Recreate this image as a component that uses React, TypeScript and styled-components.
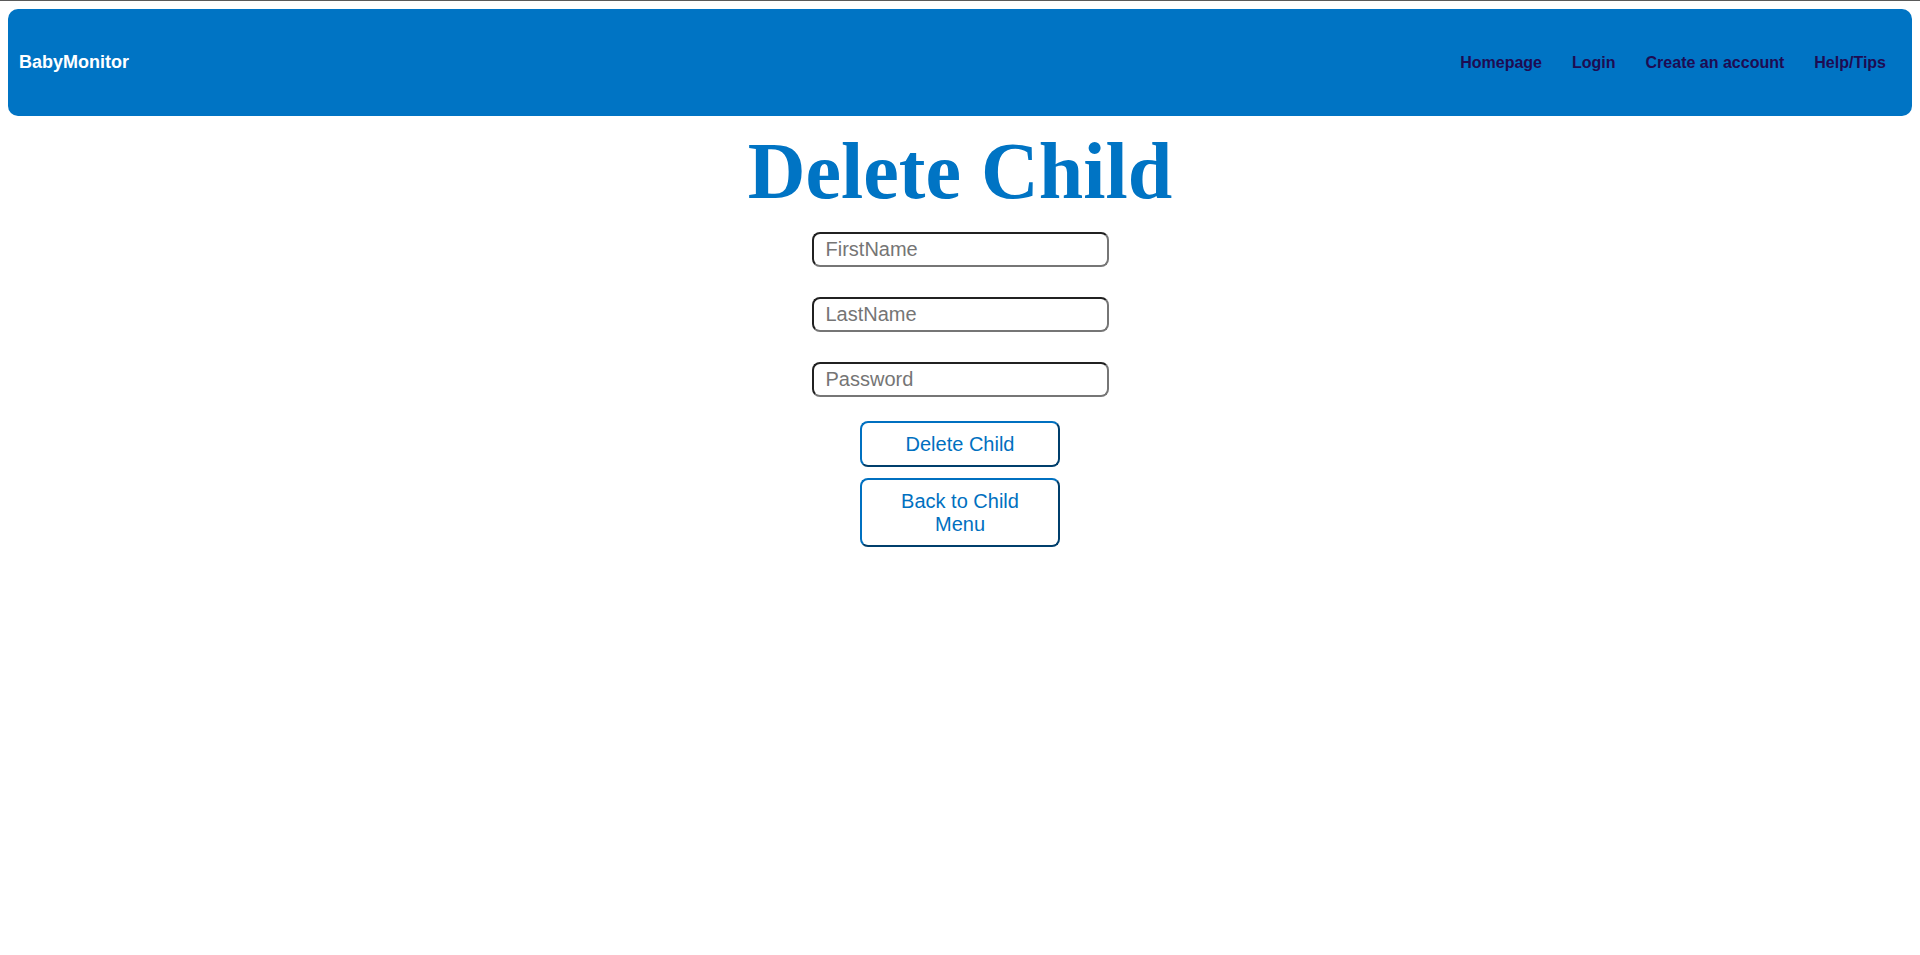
import React, { useState } from "react";
import styled, { createGlobalStyle } from "styled-components";

const GlobalStyle = createGlobalStyle`
  html {
    border-top: 1px solid #5a5a5a;
  }
  body {
    margin: 8px;
    background: #fff;
    font-family: "Liberation Sans", Arial, sans-serif;
  }
`;

const NavBar = styled.nav`
  display: flex;
  align-items: center;
  justify-content: space-between;
  height: 107px;
  padding: 0 11px;
  border-radius: 10px;
  background-color: #0074c4;
`;

const Brand = styled.a`
  font-size: 18px;
  font-weight: 700;
  color: #fff;
  text-decoration: none;
`;

const NavLinks = styled.ul`
  display: flex;
  list-style: none;
  margin: 0;
  padding: 0;
`;

const NavLink = styled.a`
  display: block;
  padding: 0 15px;
  font-size: 16px;
  font-weight: 700;
  color: #1e0b52;
  text-decoration: none;
`;

const Main = styled.main`
  display: flex;
  flex-direction: column;
  align-items: center;
`;

const Title = styled.h1`
  margin: 10px 0 15px;
  font-family: "Liberation Serif", "Times New Roman", serif;
  font-size: 80px;
  font-weight: 700;
  line-height: normal;
  color: #0074c4;
`;

const Form = styled.form`
  display: flex;
  flex-direction: column;
  align-items: center;
`;

const Field = styled.input`
  box-sizing: border-box;
  width: 297px;
  height: 35px;
  margin-bottom: 30px;
  padding: 0 12px;
  border: 2px inset #767676;
  border-radius: 8px;
  font-family: "Liberation Sans", Arial, sans-serif;
  font-size: 20px;
  color: #000;
  background: #fff;

  &::placeholder {
    color: #757575;
  }
`;

const Button = styled.button<{ $gap?: number }>`
  box-sizing: border-box;
  width: 200px;
  margin-top: ${(p) => p.$gap ?? 0}px;
  padding: 9.5px 20px;
  border: 2px outset #0070c0;
  border-radius: 8px;
  background: #fff;
  font-family: "Liberation Sans", Arial, sans-serif;
  font-size: 20px;
  line-height: 23px;
  color: #0070c0;
  cursor: pointer;
`;

const links = ["Homepage", "Login", "Create an account", "Help/Tips"];

const App = () => {
  const [firstName, setFirstName] = useState("");
  const [lastName, setLastName] = useState("");
  const [password, setPassword] = useState("");

  const handleSubmit = (event: React.FormEvent<HTMLFormElement>) => {
    event.preventDefault();
  };

  return (
    <>
      <GlobalStyle />
      <NavBar>
        <Brand href="#">BabyMonitor</Brand>
        <NavLinks>
          {links.map((link) => (
            <li key={link}>
              <NavLink href="#">{link}</NavLink>
            </li>
          ))}
        </NavLinks>
      </NavBar>
      <Main>
        <Title>Delete Child</Title>
        <Form onSubmit={handleSubmit}>
          <Field
            type="text"
            placeholder="FirstName"
            value={firstName}
            onChange={(e) => setFirstName(e.target.value)}
          />
          <Field
            type="text"
            placeholder="LastName"
            value={lastName}
            onChange={(e) => setLastName(e.target.value)}
          />
          <Field
            type="password"
            placeholder="Password"
            value={password}
            onChange={(e) => setPassword(e.target.value)}
          />
          <Button type="submit" $gap={-6}>
            Delete Child
          </Button>
          <Button type="button" $gap={11}>
            Back to Child Menu
          </Button>
        </Form>
      </Main>
    </>
  );
};

export default App;
